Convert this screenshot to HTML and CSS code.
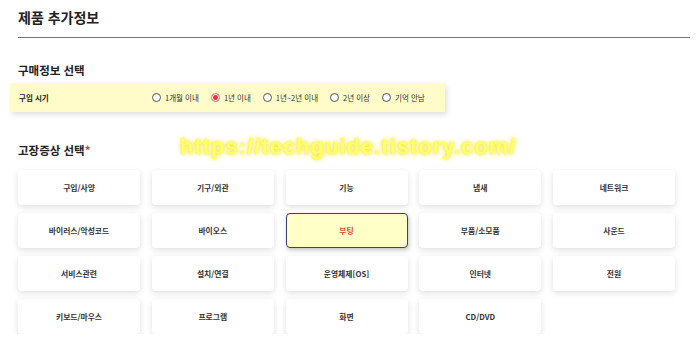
FILE: index.html
```html
<!DOCTYPE html>
<html lang="ko">
<head>
    <meta charset="UTF-8">
    <meta name="viewport" content="width=device-width, initial-scale=1.0">
    <title>제품 추가정보</title>
    <link rel="stylesheet" href="styles.css">
</head>
<body>
    <div class="page">
        <h1 class="page-title">제품 추가정보</h1>

        <section class="block">
            <h2 class="block-title">구매정보 선택</h2>
            <div class="purchase-bar">
                <span class="bar-label">구입 시기</span>
                <div class="radio-group">
                    <label class="radio"><span class="dot"></span>1개월 이내</label>
                    <label class="radio checked"><span class="dot"></span>1년 이내</label>
                    <label class="radio"><span class="dot"></span>1년~2년 이내</label>
                    <label class="radio"><span class="dot"></span>2년 이상</label>
                    <label class="radio"><span class="dot"></span>기억 안남</label>
                </div>
            </div>
        </section>

        <section class="block symptoms">
            <h2 class="block-title">고장증상 선택<span class="req">*</span></h2>
            <div class="watermark">https://techguide.tistory.com/</div>
            <div class="symptom-grid">
                <button class="symptom">구입/사양</button>
                <button class="symptom">기구/외관</button>
                <button class="symptom">기능</button>
                <button class="symptom">냄새</button>
                <button class="symptom">네트워크</button>
                <button class="symptom">바이러스/악성코드</button>
                <button class="symptom">바이오스</button>
                <button class="symptom selected">부팅</button>
                <button class="symptom">부품/소모품</button>
                <button class="symptom">사운드</button>
                <button class="symptom">서비스관련</button>
                <button class="symptom">설치/연결</button>
                <button class="symptom">운영체제[OS]</button>
                <button class="symptom">인터넷</button>
                <button class="symptom">전원</button>
                <button class="symptom">키보드/마우스</button>
                <button class="symptom">프로그램</button>
                <button class="symptom">화면</button>
                <button class="symptom">CD/DVD</button>
            </div>
        </section>
    </div>
</body>
</html>
```

FILE: styles.css
```css
body {
    margin: 0;
    background: #fff;
    color: #222;
    font-family: "Noto Sans CJK KR", "Noto Sans", sans-serif;
}

.page {
    padding: 6px 10px 0 18px;
}

.page-title {
    margin: 0;
    font-size: 14px;
    font-weight: 700;
    line-height: 22px;
    padding-bottom: 9px;
    border-bottom: 1px solid #777;
}

.block {
    position: relative;
}

.block-title {
    margin: 0;
    font-size: 11.5px;
    font-weight: 700;
    line-height: 16px;
}

.block:first-of-type {
    padding-top: 24px;
}

.purchase-bar {
    display: flex;
    align-items: center;
    width: 426px;
    height: 29px;
    margin: 5px 0 0 -8px;
    padding-left: 9px;
    background: #fffcc9;
    box-shadow: 2px 3px 5px rgba(0,0,0,0.12);
}

.bar-label {
    width: 133px;
    font-size: 7.5px;
    font-weight: 700;
}

.radio-group {
    display: flex;
    gap: 12px;
}

.radio {
    display: flex;
    align-items: center;
    gap: 4px;
    font-size: 7.5px;
    color: #333;
}

.dot {
    width: 7px;
    height: 7px;
    border: 1px solid #555;
    border-radius: 50%;
    background: #fff;
}

.radio.checked .dot {
    background: #e03535;
    border-color: #e89090;
    box-shadow: inset 0 0 0 1px #fff;
}

.symptoms {
    padding-top: 30px;
}

.req {
    color: #e33;
}

.watermark {
    position: absolute;
    top: 22px;
    left: 162px;
    font-family: "Liberation Sans", sans-serif;
    font-size: 22px;
    font-weight: 700;
    letter-spacing: 1px;
    color: #ffff66;
    text-shadow: 0 0 3px #f4e22a, 0 0 6px #f6e860;
    white-space: nowrap;
}

.symptom-grid {
    display: grid;
    grid-template-columns: repeat(5, 122px);
    column-gap: 11.75px;
    row-gap: 8px;
    margin-top: 12px;
}

.symptom {
    height: 35px;
    border: none;
    border-radius: 4px;
    background: #fff;
    box-shadow: 0 2px 6px rgba(0,0,0,0.13);
    font-family: inherit;
    font-size: 7.8px;
    font-weight: 700;
    color: #333;
}

.symptom.selected {
    background: #ffffc8;
    border: 1.5px solid #3b3f88;
    color: #d9502c;
    box-shadow: 1px 2px 4px rgba(0,0,0,0.25);
}
```
